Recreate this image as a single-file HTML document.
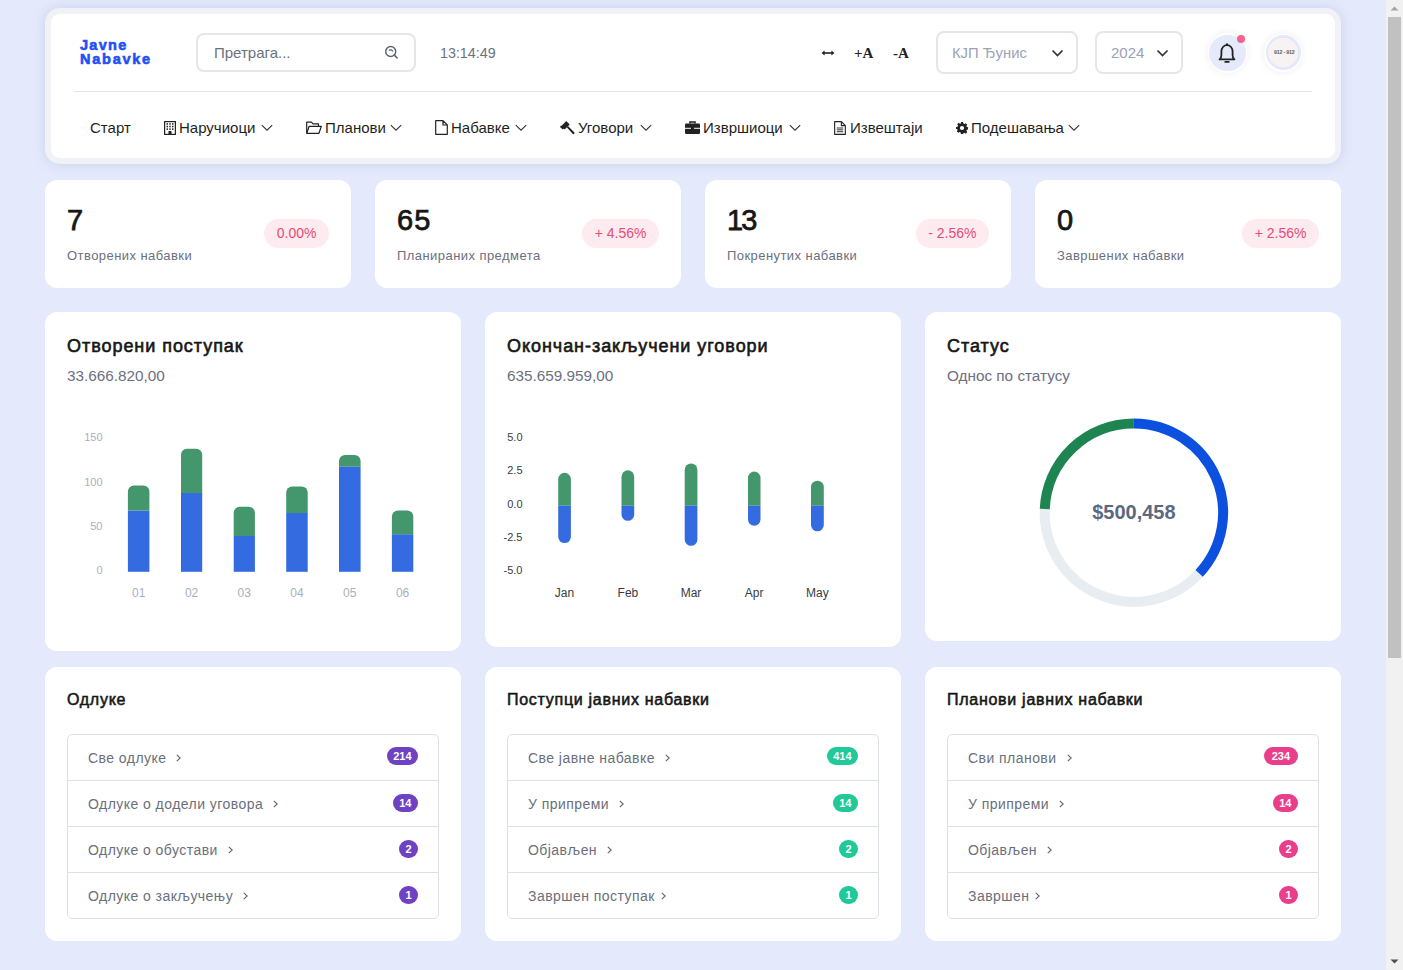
<!DOCTYPE html>
<html><head><meta charset="utf-8">
<style>
*{box-sizing:border-box;margin:0;padding:0}
html,body{width:1403px;height:970px;overflow:hidden}
body{background:#e4eafb;font-family:"Liberation Sans",sans-serif;position:relative;color:#111}
.abs{position:absolute}
.t{position:absolute;white-space:nowrap;line-height:1}
.card{position:absolute;background:#fff;border-radius:12px}
/* scrollbar */
#sb{position:absolute;left:1386px;top:0;width:17px;height:970px;background:#f1f1f1}
#thumb{position:absolute;left:1388px;top:17px;width:13px;height:641px;background:#c1c1c1}
/* header */
#hdr{position:absolute;left:45px;top:8px;width:1296px;height:156px;border-radius:15px;background:#f1f2f6;box-shadow:0 0 12px rgba(150,160,210,.35)}
#hdrin{position:absolute;left:51px;top:14px;width:1284px;height:144px;border-radius:9px;background:#fff}
.logo{position:absolute;left:80px;top:39px;color:#1f50f6;font-weight:bold;font-size:14.5px;line-height:13.8px;letter-spacing:1.3px;-webkit-text-stroke:0.6px #1f50f6}
.search{position:absolute;left:196px;top:33px;width:220px;height:39px;border:2px solid #e6e6e6;border-radius:8px}
.sel{position:absolute;border:2px solid #e6e6e6;border-radius:8px;height:43px;top:31px}
.navt{position:absolute;top:120px;font-size:15px;color:#1f1f1f;line-height:15px;white-space:nowrap}
.chev{position:absolute}
.stat .num{position:absolute;left:22px;top:26px;font-size:29px;line-height:29px;color:#161616;letter-spacing:1px;-webkit-text-stroke:0.75px #161616}
.stat .lbl{position:absolute;left:22px;top:69px;font-size:13px;letter-spacing:0.44px;line-height:14px;color:#6b6f80;white-space:nowrap}
.stat .pill{position:absolute;top:39px;right:22px;height:29px;border-radius:14.5px;background:#fdebf0;color:#e84a76;font-size:14px;line-height:29px;padding:0 12.5px;white-space:nowrap}
.ctitle{position:absolute;left:22px;top:24.75px;font-size:18px;letter-spacing:0.95px;-webkit-text-stroke:0.6px #161616;color:#161616;line-height:18px;white-space:nowrap}
.csub{position:absolute;left:22px;top:55.5px;font-size:15.3px;color:#6b7080;line-height:15px;white-space:nowrap}
.ltitle{position:absolute;left:22px;top:25px;font-size:16px;letter-spacing:0.72px;-webkit-text-stroke:0.55px #161616;color:#161616;line-height:16px;white-space:nowrap}
.list{position:absolute;left:22px;top:67px;width:372px;height:185px;border:1px solid #dde1e6;border-radius:5px}
.row{position:absolute;left:0;width:370px;height:46px;border-top:1px solid #dde1e6}
.row:first-child{border-top:none;height:45px}
.row:first-child .it{top:16px}
.row:first-child .badge{top:12px}
.row .it{position:absolute;left:20px;top:16px;font-size:14px;letter-spacing:0.45px;color:#6b6f7a;line-height:14px;white-space:nowrap}
.row .it svg{margin-left:10px;vertical-align:1.5px}
.badge{position:absolute;right:20px;top:13px;height:18px;border-radius:9px;color:#fff;font-weight:bold;font-size:11px;line-height:18px;text-align:center;padding:0 6.5px;min-width:18px}
</style></head><body>

<div id="hdr"></div>
<div id="hdrin"></div>
<div class="logo">Javne<br><span style="letter-spacing:1.75px">Nabavke</span></div>
<div class="search"></div>
<div class="t" style="left:214px;top:45px;font-size:15px;color:#6b7280">Претрага...</div>
<svg class="abs" style="left:384px;top:45px" width="15" height="15" viewBox="0 0 15 15"><circle cx="6.7" cy="6.5" r="5" fill="none" stroke="#5b6372" stroke-width="1.4"/><path d="M10.3 10.1L13.2 13" stroke="#5b6372" stroke-width="1.5" stroke-linecap="round"/><path d="M5.0 5.4A2.5 2.5 0 0 1 8.8 6.4" fill="none" stroke="#5b6372" stroke-width="1.3"/></svg>
<div class="t" style="left:440px;top:46px;font-size:14.3px;color:#6b7280">13:14:49</div>

<!-- text size controls -->
<svg class="abs" style="left:821px;top:47.5px" width="14" height="10" viewBox="0 0 14 10"><path d="M2 5H12" stroke="#222" stroke-width="1.6"/><path d="M0.6 5L3.6 2.6V7.4Z M13.4 5L10.4 2.6V7.4Z" fill="#222"/></svg>
<div class="t" style="left:854px;top:46px;font-family:'Liberation Serif',serif;font-weight:bold;font-size:15px;color:#222">+A</div>
<div class="t" style="left:893px;top:46px;font-family:'Liberation Serif',serif;font-weight:bold;font-size:15px;color:#222">-A</div>

<div class="sel" style="left:936px;width:142px"></div>
<div class="t" style="left:952px;top:46px;font-size:14.8px;color:#9aa3b5">КЈП Ђунис</div>
<svg class="abs" style="left:1051px;top:48px" width="13" height="10" viewBox="0 0 13 10"><path d="M1.5 2.5L6.5 7.5L11.5 2.5" fill="none" stroke="#333" stroke-width="1.7"/></svg>
<div class="sel" style="left:1095px;width:88px"></div>
<div class="t" style="left:1111px;top:45px;font-size:15px;color:#9aa3b5">2024</div>
<svg class="abs" style="left:1156px;top:48px" width="13" height="10" viewBox="0 0 13 10"><path d="M1.5 2.5L6.5 7.5L11.5 2.5" fill="none" stroke="#333" stroke-width="1.7"/></svg>

<!-- bell -->
<div class="abs" style="left:1207.5px;top:33px;width:39.5px;height:39.5px;border-radius:50%;background:#fff;box-shadow:0 0 9px rgba(0,0,0,.07)"></div>
<div class="abs" style="left:1209px;top:34.5px;width:36.5px;height:36.5px;border-radius:50%;background:#e5eafa"></div>
<svg class="abs" style="left:1218px;top:43px" width="18" height="21" viewBox="0 0 18 21"><path d="M1.6 16.4C3.2 15.2 3.4 13.8 3.4 12.2V8.4C3.4 4.9 5.8 2.2 9 2.2S14.6 4.9 14.6 8.4V12.2C14.6 13.8 14.8 15.2 16.4 16.4Z" fill="none" stroke="#222" stroke-width="1.8" stroke-linejoin="round"/><circle cx="9" cy="1.4" r="1.1" fill="#222"/><path d="M7.2 18.9H10.8" stroke="#222" stroke-width="1.7" stroke-linecap="round"/></svg>
<div class="abs" style="left:1237px;top:35px;width:8.2px;height:8.2px;border-radius:50%;background:#f5628a"></div>
<!-- avatar -->
<div class="abs" style="left:1264px;top:33.5px;width:38px;height:38px;border-radius:50%;background:#fff;box-shadow:0 0 9px rgba(0,0,0,.07)"></div>
<div class="abs" style="left:1265.5px;top:35px;width:35px;height:35px;border-radius:50%;background:#e3e9fb"></div>
<div class="abs" style="left:1268.2px;top:37.7px;width:29.6px;height:29.6px;border-radius:50%;background:#f7f3f2"></div>
<div class="t" style="left:1274px;top:50px;font-size:5.2px;font-weight:bold;color:#5a5a5a;letter-spacing:-0.15px">912 - 912</div>

<!-- separator -->
<div class="abs" style="left:74px;top:91px;width:1238px;height:1px;background:#e2e4ea"></div>

<!-- nav -->
<div class="navt" style="left:90px">Старт</div>
<svg class="abs" style="left:164px;top:121px" width="12" height="14" viewBox="0 0 12 14"><rect x="0.6" y="0.6" width="10.8" height="12.8" fill="none" stroke="#222" stroke-width="1.2"/><g fill="#222"><rect x="2.5" y="2.2" width="1.5" height="1.5"/><rect x="5.25" y="2.2" width="1.5" height="1.5"/><rect x="8" y="2.2" width="1.5" height="1.5"/><rect x="2.5" y="4.8" width="1.5" height="1.5"/><rect x="5.25" y="4.8" width="1.5" height="1.5"/><rect x="8" y="4.8" width="1.5" height="1.5"/><rect x="2.5" y="7.4" width="1.5" height="1.5"/><rect x="5.25" y="7.4" width="1.5" height="1.5"/><rect x="8" y="7.4" width="1.5" height="1.5"/><rect x="4.5" y="10" width="3" height="3.4"/></g></svg>
<div class="navt" style="left:179px">Наручиоци</div>
<svg class="chev" style="left:261px;top:124px" width="12" height="8" viewBox="0 0 12 8"><path d="M0.8 1.2L6 6.2L11.2 1.2" fill="none" stroke="#333" stroke-width="1.1"/></svg>

<svg class="abs" style="left:306px;top:121px" width="16" height="13" viewBox="0 0 16 13"><path d="M0.7 12.3V1.2h4.8l1.5 1.6h5.5v2.2" fill="none" stroke="#222" stroke-width="1.2" stroke-linejoin="round"/><path d="M0.7 12.3L3.2 5.3h12.2l-2.5 7Z" fill="none" stroke="#222" stroke-width="1.2" stroke-linejoin="round"/></svg>
<div class="navt" style="left:325px">Планови</div>
<svg class="chev" style="left:390px;top:124px" width="12" height="8" viewBox="0 0 12 8"><path d="M0.8 1.2L6 6.2L11.2 1.2" fill="none" stroke="#333" stroke-width="1.1"/></svg>

<svg class="abs" style="left:435px;top:120px" width="13" height="15" viewBox="0 0 13 15"><path d="M0.7 0.7h7.3l4.3 4.3v9.3H0.7Z M8 0.7V5h4.3" fill="none" stroke="#222" stroke-width="1.2" stroke-linejoin="round"/></svg>
<div class="navt" style="left:451px">Набавке</div>
<svg class="chev" style="left:515px;top:124px" width="12" height="8" viewBox="0 0 12 8"><path d="M0.8 1.2L6 6.2L11.2 1.2" fill="none" stroke="#333" stroke-width="1.1"/></svg>

<svg class="abs" style="left:560px;top:120px" width="15" height="15" viewBox="0 0 15 15"><path d="M1.2 6.2L6.3 1.1l3.4 3.4-5.1 5.1Z" fill="#222"/><path d="M6.8 7.2L8 6l6.2 6.2a1.1 1.1 0 0 1-1.6 1.6Z" fill="#222"/><rect x="0" y="6.5" width="4" height="2" transform="rotate(45 2 7.5)" fill="#222"/></svg>
<div class="navt" style="left:578px">Уговори</div>
<svg class="chev" style="left:640px;top:124px" width="12" height="8" viewBox="0 0 12 8"><path d="M0.8 1.2L6 6.2L11.2 1.2" fill="none" stroke="#333" stroke-width="1.1"/></svg>

<svg class="abs" style="left:685px;top:121px" width="15" height="13" viewBox="0 0 15 13"><path d="M5 2.5V1h5v1.5" fill="none" stroke="#222" stroke-width="1.6"/><rect x="0" y="2.5" width="15" height="10.5" rx="1.2" fill="#222"/><rect x="0" y="6.8" width="15" height="1" fill="#fff"/><rect x="6" y="6" width="3" height="2.4" fill="#222"/></svg>
<div class="navt" style="left:703px">Извршиоци</div>
<svg class="chev" style="left:789px;top:124px" width="12" height="8" viewBox="0 0 12 8"><path d="M0.8 1.2L6 6.2L11.2 1.2" fill="none" stroke="#333" stroke-width="1.1"/></svg>

<svg class="abs" style="left:834px;top:121px" width="12" height="14" viewBox="0 0 13 15" preserveAspectRatio="none"><path d="M0.7 0.7h7.3l4.3 4.3v9.3H0.7Z M8 0.7V5h4.3" fill="none" stroke="#222" stroke-width="1.2" stroke-linejoin="round"/><path d="M3 7.5h7M3 9.5h7M3 11.5h7" stroke="#222" stroke-width="1"/></svg>
<div class="navt" style="left:850px">Извештаји</div>

<svg class="abs" style="left:955.5px;top:121.5px" width="12" height="12" viewBox="0 0 16 16"><path fill="#222" d="M6.6 0h2.8l.4 2.1c.5.2 1 .4 1.4.7l1.8-1.2 2 2-1.2 1.8c.3.4.5.9.7 1.4l2.1.4v2.8l-2.1.4c-.2.5-.4 1-.7 1.4l1.2 1.8-2 2-1.8-1.2c-.4.3-.9.5-1.4.7L9.4 16H6.6l-.4-2.1c-.5-.2-1-.4-1.4-.7l-1.8 1.2-2-2 1.2-1.8c-.3-.4-.5-.9-.7-1.4L0 9.4V6.6l2.1-.4c.2-.5.4-1 .7-1.4L1.6 3l2-2 1.8 1.2c.4-.3.9-.5 1.4-.7Z M8 5.2a2.8 2.8 0 1 0 0 5.6a2.8 2.8 0 1 0 0-5.6Z" fill-rule="evenodd"/></svg>
<div class="navt" style="left:971px">Подешавања</div>
<svg class="chev" style="left:1068px;top:124px" width="12" height="8" viewBox="0 0 12 8"><path d="M0.8 1.2L6 6.2L11.2 1.2" fill="none" stroke="#333" stroke-width="1.1"/></svg>

<!-- STAT CARDS -->
<div class="card stat" style="left:45px;top:180px;width:306px;height:108px">
  <div class="num">7</div><div class="lbl">Отворених набавки</div>
  <div class="pill">0.00%</div>
</div>
<div class="card stat" style="left:375px;top:180px;width:306px;height:108px">
  <div class="num">65</div><div class="lbl">Планираних предмета</div>
  <div class="pill">+ 4.56%</div>
</div>
<div class="card stat" style="left:705px;top:180px;width:306px;height:108px">
  <div class="num" style="letter-spacing:-2px">13</div><div class="lbl">Покренутих набавки</div>
  <div class="pill">- 2.56%</div>
</div>
<div class="card stat" style="left:1035px;top:180px;width:306px;height:108px">
  <div class="num">0</div><div class="lbl">Завршених набавки</div>
  <div class="pill">+ 2.56%</div>
</div>

<!-- CHART CARDS -->
<div class="card" style="left:45px;top:312px;width:416px;height:339px">
  <div class="ctitle">Отворени поступак</div>
  <div class="csub">33.666.820,00</div>
</div>
<div class="card" style="left:485px;top:312px;width:416px;height:335px">
  <div class="ctitle">Окончан-закључени уговори</div>
  <div class="csub">635.659.959,00</div>
</div>
<div class="card" style="left:925px;top:312px;width:416px;height:329px">
  <div class="ctitle">Статус</div>
  <div class="csub">Однос по статусу</div>
</div>

<!-- CHARTS -->
<svg class="abs" style="left:0;top:0" width="1403" height="970" viewBox="0 0 1403 970" font-family="Liberation Sans, sans-serif">
<rect x="127.9" y="510.5" width="21.5" height="61.3" fill="#356be0"/>
<path d="M127.9 510.5V491.6a6 6 0 0 1 6 -6H143.4a6 6 0 0 1 6 6V510.5Z" fill="#44966c"/>
<rect x="181.0" y="492.9" width="21.2" height="78.9" fill="#356be0"/>
<path d="M181.0 492.9V454.8a6 6 0 0 1 6 -6H196.2a6 6 0 0 1 6 6V492.9Z" fill="#44966c"/>
<rect x="233.7" y="536.0" width="21.2" height="35.8" fill="#356be0"/>
<path d="M233.7 536.0V512.8a6 6 0 0 1 6 -6H248.9a6 6 0 0 1 6 6V536.0Z" fill="#44966c"/>
<rect x="286.2" y="513.0" width="21.5" height="58.8" fill="#356be0"/>
<path d="M286.2 513.0V492.6a6 6 0 0 1 6 -6H301.7a6 6 0 0 1 6 6V513.0Z" fill="#44966c"/>
<rect x="339.0" y="466.4" width="21.6" height="105.4" fill="#356be0"/>
<path d="M339.0 466.4V460.9a6 6 0 0 1 6 -6H354.6a6 6 0 0 1 6 6V466.4Z" fill="#44966c"/>
<rect x="391.9" y="534.2" width="21.4" height="37.6" fill="#356be0"/>
<path d="M391.9 534.2V516.5a6 6 0 0 1 6 -6H407.3a6 6 0 0 1 6 6V534.2Z" fill="#44966c"/>
<text x="102.5" y="441.2" text-anchor="end" font-size="11" fill="#a8afc0">150</text>
<text x="102.5" y="485.6" text-anchor="end" font-size="11" fill="#a8afc0">100</text>
<text x="102.5" y="530.2" text-anchor="end" font-size="11" fill="#a8afc0">50</text>
<text x="102.5" y="574.4" text-anchor="end" font-size="11" fill="#a8afc0">0</text>
<text x="138.7" y="597" text-anchor="middle" font-size="12" fill="#a8afc0">01</text>
<text x="191.6" y="597" text-anchor="middle" font-size="12" fill="#a8afc0">02</text>
<text x="244.3" y="597" text-anchor="middle" font-size="12" fill="#a8afc0">03</text>
<text x="296.9" y="597" text-anchor="middle" font-size="12" fill="#a8afc0">04</text>
<text x="349.8" y="597" text-anchor="middle" font-size="12" fill="#a8afc0">05</text>
<text x="402.6" y="597" text-anchor="middle" font-size="12" fill="#a8afc0">06</text>
<path d="M558.2 505.8V479.2a6.35 6.35 0 0 1 12.7 0V505.8Z" fill="#44966c"/>
<path d="M558.2 505.8V536.7a6.35 6.35 0 0 0 12.7 0V505.8Z" fill="#356be0"/>
<path d="M621.5 505.8V476.7a6.35 6.35 0 0 1 12.7 0V505.8Z" fill="#44966c"/>
<path d="M621.5 505.8V514.5a6.35 6.35 0 0 0 12.7 0V505.8Z" fill="#356be0"/>
<path d="M684.7 505.8V469.8a6.35 6.35 0 0 1 12.7 0V505.8Z" fill="#44966c"/>
<path d="M684.7 505.8V539.5a6.35 6.35 0 0 0 12.7 0V505.8Z" fill="#356be0"/>
<path d="M748.0 505.8V477.8a6.25 6.25 0 0 1 12.5 0V505.8Z" fill="#44966c"/>
<path d="M748.0 505.8V519.5a6.25 6.25 0 0 0 12.5 0V505.8Z" fill="#356be0"/>
<path d="M811.0 505.8V487.1a6.40 6.40 0 0 1 12.8 0V505.8Z" fill="#44966c"/>
<path d="M811.0 505.8V524.9a6.40 6.40 0 0 0 12.8 0V505.8Z" fill="#356be0"/>
<text x="522.5" y="441.1" text-anchor="end" font-size="11" fill="#373d3f">5.0</text>
<text x="522.5" y="474.2" text-anchor="end" font-size="11" fill="#373d3f">2.5</text>
<text x="522.5" y="508.0" text-anchor="end" font-size="11" fill="#373d3f">0.0</text>
<text x="522.5" y="541.0" text-anchor="end" font-size="11" fill="#373d3f">-2.5</text>
<text x="522.5" y="574.0" text-anchor="end" font-size="11" fill="#373d3f">-5.0</text>
<text x="564.5" y="597" text-anchor="middle" font-size="12" fill="#373d3f">Jan</text>
<text x="627.9" y="597" text-anchor="middle" font-size="12" fill="#373d3f">Feb</text>
<text x="691.0" y="597" text-anchor="middle" font-size="12" fill="#373d3f">Mar</text>
<text x="754.2" y="597" text-anchor="middle" font-size="12" fill="#373d3f">Apr</text>
<text x="817.4" y="597" text-anchor="middle" font-size="12" fill="#373d3f">May</text>
<path d="M1199.14 573.43A89.2 89.2 0 0 1 1044.77 509.02" fill="none" stroke="#e8edf2" stroke-width="10"/>
<path d="M1044.77 509.02A89.2 89.2 0 0 1 1133.90 423.40" fill="none" stroke="#1e8552" stroke-width="10"/>
<path d="M1133.90 423.40A89.2 89.2 0 0 1 1199.14 573.43" fill="none" stroke="#0b50de" stroke-width="10"/>
<text x="1133.9" y="519.3" text-anchor="middle" font-size="20" font-weight="bold" fill="#5b6880">$500,458</text>
</svg>
<!-- LIST CARDS -->
<div class="card" style="left:45px;top:667px;width:416px;height:274px">
  <div class="ltitle">Одлуке</div>
  <div class="list">
    <div class="row" style="top:0"><div class="it">Све одлуке<svg width="5" height="8" viewBox="0 0 5 8"><path d="M0.8 0.8L4.2 4L0.8 7.2" fill="none" stroke="#5f6776" stroke-width="1.15"/></svg></div><div class="badge" style="background:#6f42c1">214</div></div>
    <div class="row" style="top:45px"><div class="it">Одлуке о додели уговора<svg width="5" height="8" viewBox="0 0 5 8"><path d="M0.8 0.8L4.2 4L0.8 7.2" fill="none" stroke="#5f6776" stroke-width="1.15"/></svg></div><div class="badge" style="background:#6f42c1">14</div></div>
    <div class="row" style="top:91px"><div class="it">Одлуке о обустави<svg width="5" height="8" viewBox="0 0 5 8"><path d="M0.8 0.8L4.2 4L0.8 7.2" fill="none" stroke="#5f6776" stroke-width="1.15"/></svg></div><div class="badge" style="background:#6f42c1">2</div></div>
    <div class="row" style="top:137px"><div class="it">Одлуке о закључењу<svg width="5" height="8" viewBox="0 0 5 8"><path d="M0.8 0.8L4.2 4L0.8 7.2" fill="none" stroke="#5f6776" stroke-width="1.15"/></svg></div><div class="badge" style="background:#6f42c1">1</div></div>
  </div>
</div>
<div class="card" style="left:485px;top:667px;width:416px;height:274px">
  <div class="ltitle">Поступци јавних набавки</div>
  <div class="list">
    <div class="row" style="top:0"><div class="it">Све јавне набавке<svg width="5" height="8" viewBox="0 0 5 8"><path d="M0.8 0.8L4.2 4L0.8 7.2" fill="none" stroke="#5f6776" stroke-width="1.15"/></svg></div><div class="badge" style="background:#20c997">414</div></div>
    <div class="row" style="top:45px"><div class="it">У припреми<svg width="5" height="8" viewBox="0 0 5 8"><path d="M0.8 0.8L4.2 4L0.8 7.2" fill="none" stroke="#5f6776" stroke-width="1.15"/></svg></div><div class="badge" style="background:#20c997">14</div></div>
    <div class="row" style="top:91px"><div class="it">Објављен<svg width="5" height="8" viewBox="0 0 5 8"><path d="M0.8 0.8L4.2 4L0.8 7.2" fill="none" stroke="#5f6776" stroke-width="1.15"/></svg></div><div class="badge" style="background:#20c997">2</div></div>
    <div class="row" style="top:137px"><div class="it">Завршен поступак<svg style="margin-left:6px" width="5" height="8" viewBox="0 0 5 8"><path d="M0.8 0.8L4.2 4L0.8 7.2" fill="none" stroke="#5f6776" stroke-width="1.15"/></svg></div><div class="badge" style="background:#20c997">1</div></div>
  </div>
</div>
<div class="card" style="left:925px;top:667px;width:416px;height:274px">
  <div class="ltitle">Планови јавних набавки</div>
  <div class="list">
    <div class="row" style="top:0"><div class="it">Сви планови<svg width="5" height="8" viewBox="0 0 5 8"><path d="M0.8 0.8L4.2 4L0.8 7.2" fill="none" stroke="#5f6776" stroke-width="1.15"/></svg></div><div class="badge" style="background:#e83e8c;padding:0 8px">234</div></div>
    <div class="row" style="top:45px"><div class="it">У припреми<svg width="5" height="8" viewBox="0 0 5 8"><path d="M0.8 0.8L4.2 4L0.8 7.2" fill="none" stroke="#5f6776" stroke-width="1.15"/></svg></div><div class="badge" style="background:#e83e8c">14</div></div>
    <div class="row" style="top:91px"><div class="it">Објављен<svg width="5" height="8" viewBox="0 0 5 8"><path d="M0.8 0.8L4.2 4L0.8 7.2" fill="none" stroke="#5f6776" stroke-width="1.15"/></svg></div><div class="badge" style="background:#e83e8c">2</div></div>
    <div class="row" style="top:137px"><div class="it">Завршен<svg style="margin-left:6px" width="5" height="8" viewBox="0 0 5 8"><path d="M0.8 0.8L4.2 4L0.8 7.2" fill="none" stroke="#5f6776" stroke-width="1.15"/></svg></div><div class="badge" style="background:#e83e8c">1</div></div>
  </div>
</div>

<!-- scrollbar -->
<div id="sb"></div>
<div id="thumb"></div>
<svg class="abs" style="left:1386px;top:0" width="17" height="17" viewBox="0 0 17 17"><path d="M4.5 10.5L8.5 6.5L12.5 10.5Z" fill="#a3a3a3"/></svg>
<svg class="abs" style="left:1386px;top:953px" width="17" height="17" viewBox="0 0 17 17"><path d="M4.5 6.5L8.5 10.5L12.5 6.5Z" fill="#505050"/></svg>

</body></html>
